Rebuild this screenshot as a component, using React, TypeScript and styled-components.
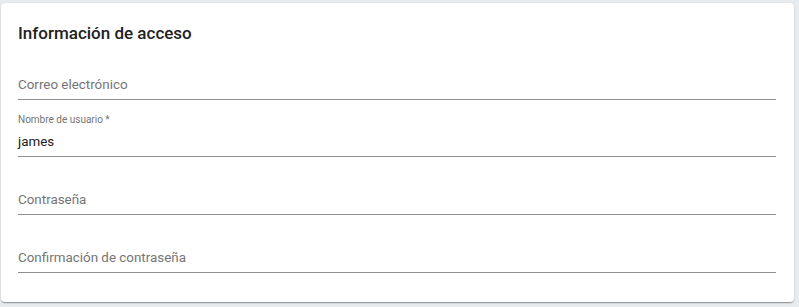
import React from "react";
import styled, { createGlobalStyle } from "styled-components";

const GlobalStyle = createGlobalStyle`
  html, body {
    margin: 0;
    padding: 0;
    background: #e9ecef;
    font-family: Roboto, "Liberation Sans", sans-serif;
  }
`;

const Page = styled.div`
  padding: 3px 5px 5px 1px;
`;

const Card = styled.section`
  background: #fff;
  border-radius: 4px;
  box-shadow: 0px 2px 1px -1px rgba(0, 0, 0, 0.2), 0px 1px 1px 0px rgba(0, 0, 0, 0.14),
    0px 1px 3px 0px rgba(0, 0, 0, 0.12);
  padding: 21px 18px 30px 17px;
  height: 299px;
  box-sizing: border-box;
`;

const Title = styled.h2`
  margin: 0;
  font-size: 17px;
  font-weight: 500;
  line-height: 18px;
  color: #212121;
`;

const Field = styled.div`
  height: 57.7px;
  display: flex;
  flex-direction: column;
  justify-content: flex-end;
  border-bottom: 1px solid #8f8f8f;
  box-sizing: border-box;
`;

const SmallLabel = styled.label`
  font-size: 10px;
  line-height: 12px;
  color: #757575;
  margin-bottom: 2px;
`;

const InputRow = styled.div<{ $empty: boolean }>`
  height: 28px;
  line-height: 28px;
  font-size: 13.4px;
  color: ${(p) => (p.$empty ? "#757575" : "#212121")};
`;

type FieldProps = { label: string; value?: string; required?: boolean };

const TextField = ({ label, value, required }: FieldProps) => {
  const text = required ? `${label} *` : label;
  return (
    <Field>
      {value && <SmallLabel>{text}</SmallLabel>}
      <InputRow $empty={!value}>{value || text}</InputRow>
    </Field>
  );
};

export default function App() {
  return (
    <Page>
      <GlobalStyle />
      <Card>
        <Title>Información de acceso</Title>
        <TextField label="Correo electrónico" />
        <TextField label="Nombre de usuario" value="james" required />
        <TextField label="Contraseña" />
        <TextField label="Confirmación de contraseña" />
      </Card>
    </Page>
  );
}
